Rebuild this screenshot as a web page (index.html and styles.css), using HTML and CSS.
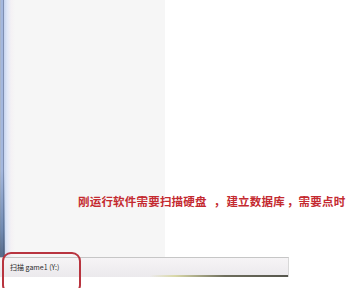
FILE: index.html
```html
<!DOCTYPE html>
<html lang="zh">
<head>
<meta charset="utf-8">
<link rel="stylesheet" href="styles.css">
</head>
<body>
<div class="screen">
  <div class="main">
    <div class="frame"><div class="frame-edge"></div></div>
    <div class="panel"></div>
    <div class="content">
      <div class="marks">
        <span class="mark dot"></span>
        <span class="mark dash"></span>
        <span class="mark dot"></span>
        <span class="mark gray"></span>
      </div>
    </div>
  </div>
  <div class="statusrow">
    <div class="statusbar"><span class="status-text">扫描 game1 (Y:)</span></div>
  </div>
  <p class="note">刚运行软件需要扫描硬盘<span class="comma">，</span>建立数据库<span class="comma comma-2">，</span>需要点时</p>
  <div class="highlight"></div>
</div>
</body>
</html>
```

FILE: styles.css
```css
html, body {
  margin: 0;
  padding: 0;
  background: #ffffff;
}
.screen {
  position: relative;
  width: 350px;
  height: 288px;
  overflow: hidden;
  font-family: "Noto Sans CJK SC", "Liberation Sans", sans-serif;
}
.main {
  display: flex;
  height: 257px;
}
.frame {
  width: 15px;
  flex: none;
  display: flex;
  background: linear-gradient(to right,
    #a9b6cc 0px, #a9b6cc 1px,
    #a4b8de 1px, #a4b8de 3px,
    #7e8fb2 3px, #7e8fb2 4px,
    #c6d4ee 4px, #dfe7f7 7px,
    #f4f1f4 11px, #f6f6f6 15px);
}
.frame-edge {
  width: 5px;
  background: linear-gradient(to bottom, rgba(70,100,140,0) 0px, rgba(70,100,140,0) 170px, rgba(70,100,140,0.55) 230px, rgba(60,80,110,0.75) 257px);
}
.panel {
  width: 150px;
  flex: none;
  background: #f6f6f6;
}
.content {
  flex: 1;
  background: #ffffff;
  display: flex;
  justify-content: flex-end;
  padding-right: 21px;
}
.marks {
  display: flex;
  flex-direction: column;
  align-items: center;
  padding-top: 225px;
  gap: 9px;
}
.mark {
  display: block;
  background: #7ccfd8;
}
.mark.dot { width: 2px; height: 3px; }
.mark.dash { width: 3px; height: 2px; }
.mark.gray { width: 3px; height: 1px; background: #c8c8c8; margin-top: 8px; }
.statusrow {
  display: flex;
  height: 20px;
}
.statusbar {
  width: 289px;
  box-sizing: border-box;
  border-top: 1px solid #c6c6c6;
  border-right: 1px solid #d8d8d8;
  background: linear-gradient(to bottom, #f6f4f6, #ebe9ec);
  display: flex;
  align-items: center;
  padding-left: 10px;
  position: relative;
}
.statusbar::after {
  content: "";
  position: absolute;
  left: 0;
  right: 0;
  bottom: 0;
  height: 2px;
  background: linear-gradient(to right, rgba(255,255,255,0) 0px, rgba(255,255,255,0) 150px, #d9d8a8 175px, #6d6d5c 225px, #55554c 289px);
}
.status-text {
  font-size: 7px;
  color: #2a2a2a;
  line-height: 1;
  white-space: nowrap;
}
.note {
  position: absolute;
  left: 78px;
  top: 193px;
  margin: 0;
  font-size: 11.5px;
  line-height: 16px;
  letter-spacing: 0.2px;
  font-weight: 700;
  color: #c42a30;
  white-space: nowrap;
}
.comma {
  padding-left: 7px;
  padding-right: 1px;
}
.comma-2 {
  padding-left: 2px;
  padding-right: 0;
}
.highlight {
  position: absolute;
  left: 2px;
  top: 252px;
  width: 79px;
  height: 42px;
  box-sizing: border-box;
  border: 2px solid #b8343f;
  border-radius: 9px;
}
```
